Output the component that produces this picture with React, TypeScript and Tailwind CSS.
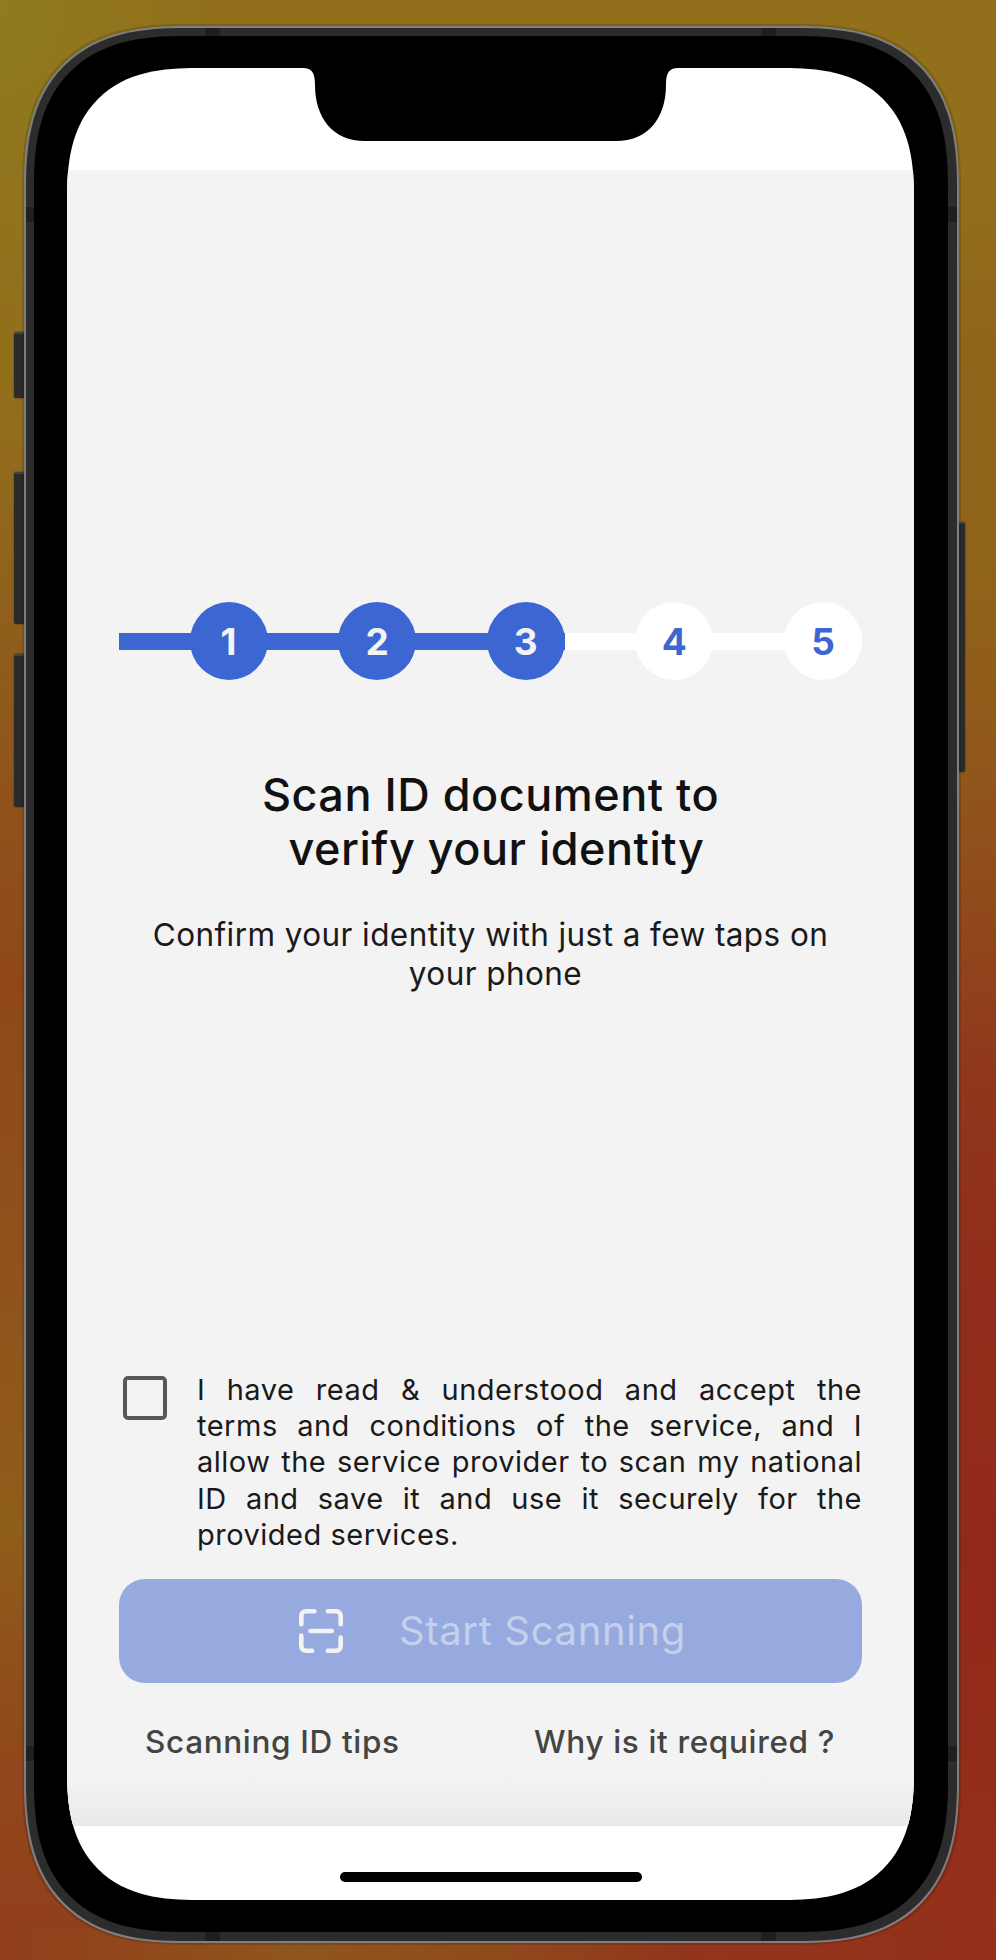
import React from "react";

const steps = [1, 2, 3, 4, 5];
const CURRENT_STEP = 3;

const consentLines = [
  "I have read & understood and accept the",
  "terms and conditions of the service, and I",
  "allow the service provider to scan my national",
  "ID and save it and use it securely for the",
];

function ScanIcon() {
  return (
    <svg width="44" height="44" viewBox="0 0 44 44" fill="none" stroke="#f3f3f3" strokeWidth="4.6" strokeLinecap="round" strokeLinejoin="round">
      <path d="M2.3 15.2V6.8a4.5 4.5 0 0 1 4.5-4.5h8.6" />
      <path d="M28.8 2.3h8.4a4.5 4.5 0 0 1 4.5 4.5v8.4" />
      <path d="M2.3 26.6v10.6a4.5 4.5 0 0 0 4.5 4.5h6.4" />
      <path d="M28.8 41.7h8.4a4.5 4.5 0 0 0 4.5-4.5v-8.6" />
      <path d="M11.4 22h21.4" />
    </svg>
  );
}

function Stepper() {
  return (
    <div className="flex h-[78px] w-[743px] items-center">
      {steps.map((n) => {
        const done = n <= CURRENT_STEP;
        return (
          <div
            key={n}
            className={`flex h-[17px] flex-1 items-center justify-end ${done ? "bg-[#3c66d2]" : "bg-white"}`}
          >
            <div
              className={`flex size-[78px] shrink-0 items-center justify-center rounded-full pt-px text-[37px] font-bold leading-none ${
                done ? "bg-[#3c66d2] text-[#f3f3f3]" : "bg-white text-[#3c66d2]"
              }`}
            >
              {n}
            </div>
          </div>
        );
      })}
    </div>
  );
}

export default function App() {
  return (
    <div className="relative h-[1960px] w-[996px] overflow-hidden bg-[#92701b] font-['Inter',sans-serif]">
      {/* Backdrop colours */}
      <div className="absolute inset-y-0 left-0 w-1/2 bg-[linear-gradient(180deg,#92701b_0px,#92701b_380px,#8f5f1b_620px,#90521b_810px,#8f471a_980px,#90501b_1220px,#8f5e1a_1530px,#904b1b_1710px,#91431b_1850px,#913e1b_1960px)]" />
      <div className="absolute inset-y-0 right-0 w-1/2 bg-[linear-gradient(180deg,#92701b_0px,#92701b_160px,#90651a_340px,#90641a_560px,#90581b_760px,#904a1b_900px,#91361b_1090px,#902d1b_1280px,#92291a_1600px,#93321a_1960px)]" />
      <div className="absolute left-0 top-0 h-[300px] w-[200px] bg-[radial-gradient(ellipse_at_top_left,#8f7b20_0%,#90771e88_45%,transparent_100%)]" />
      <div className="absolute bottom-0 left-0 h-8 w-full bg-[linear-gradient(90deg,#913e1b_0%,#904a1b_16%,#8f561b_30%,#904a1b_50%,#92361b_68%,#93301a_100%)]" />

      {/* Side keys */}
      <div className="absolute left-[14px] top-[332px] h-[66px] w-[14px] rounded-l-[2px] border-t-2 border-[#44443e] bg-[#2b2b2b] shadow-[0_0_2px_#0008]" />
      <div className="absolute left-[14px] top-[472px] h-[152px] w-[14px] rounded-l-[2px] border-t-2 border-[#44443e] bg-[#2b2b2b] shadow-[0_0_2px_#0008]" />
      <div className="absolute left-[14px] top-[654px] h-[153px] w-[14px] rounded-l-[2px] border-t-2 border-[#44443e] bg-[#2b2b2b] shadow-[0_0_2px_#0008]" />
      <div className="absolute left-[954px] top-[522px] h-[250px] w-[11px] rounded-r-[2px] border-t-2 border-[#44443e] bg-[#2b2b2b] shadow-[0_0_2px_#0008]" />

      {/* Device body */}
      <div className="relative ml-6 mt-[26px] h-[1917px] w-[935px] rounded-[140px] bg-[#7f7f7f] p-[2px] shadow-[0_0_0_2px_#00000022] supports-[corner-shape:round]:rounded-[162px] supports-[corner-shape:round]:[corner-shape:superellipse(1.35)]">
        <div className="relative h-full w-full overflow-hidden rounded-[138px] bg-[#2c2c2c] p-2 pr-[9px] pb-[9px] supports-[corner-shape:round]:rounded-[160px] supports-[corner-shape:round]:[corner-shape:superellipse(1.35)]">
          <div className="absolute left-[179px] top-0 h-full w-[15px] bg-[#1f1f1f]" />
          <div className="absolute left-[735px] top-0 h-full w-[15px] bg-[#1f1f1f]" />
          <div className="absolute left-0 top-[179px] h-[15px] w-full bg-[#1f1f1f]" />
          <div className="absolute left-0 top-[1718px] h-[15px] w-full bg-[#1f1f1f]" />
          <div className="relative h-full w-full rounded-[130px] bg-black pb-8 pl-[33px] pr-[34px] pt-8 supports-[corner-shape:round]:rounded-[151px] supports-[corner-shape:round]:[corner-shape:superellipse(1.35)]">
            <Screen />
          </div>
        </div>
      </div>
    </div>
  );
}

function Screen() {
  return (
    <div className="relative flex h-[1832px] w-[847px] flex-col overflow-hidden rounded-[106px] bg-white supports-[corner-shape:round]:rounded-[130px] supports-[corner-shape:round]:[corner-shape:superellipse(1.35)]">
      <svg className="absolute left-[236px] top-0" width="375" height="74" viewBox="0 0 375 74">
        <path d="M0 0C9 0 12 5 12 17C12 50 30 73 62 73H313C345 73 363 50 363 17C363 5 366 0 375 0Z" fill="#000" />
      </svg>

      <main className="mt-[102px] flex h-[1656px] flex-col bg-[#f3f3f3] bg-[linear-gradient(180deg,transparent_1600px,#efefef_1630px,#e9e9e9_1656px)] px-[52px] pt-[432px]">
        <Stepper />

        <h1 className="mt-[88px] text-center text-[45px] font-medium leading-[54px] tracking-[0.5px] text-[#111]">
          Scan ID document to
          <br />
          <span className="ml-[12px]">verify your identity</span>
        </h1>
        <p className="mt-[39px] text-center text-[31.5px] leading-[39px] tracking-[0.42px] text-[#1a1a1a]">
          Confirm your identity with just a few taps on
          <br />
          <span className="ml-[10px]">your phone</span>
        </p>

        <label className="mt-[379px] flex h-[181px]">
          <span className="ml-[4px] mt-[4px] size-[44px] shrink-0 rounded-[5px] border-[4.5px] border-[#575757]" />
          <span className="ml-[30px] w-[665px] text-[29px] leading-[36.2px] tracking-[0.5px] text-[#1a1a1a]">
            {consentLines.map((line) => (
              <span key={line} className="block [text-align-last:justify]">
                {line}{" "}
              </span>
            ))}
            <span className="block">provided services.</span>
          </span>
        </label>

        <button className="mt-[26px] flex h-[104px] w-[743px] items-center rounded-[26px] bg-[#96aadf] pl-[180px]">
          <ScanIcon />
          <span className="ml-[56px] text-[40px] leading-none tracking-[0.65px] text-[#c5d0ea]">Start Scanning</span>
        </button>

        <nav className="mt-[39px] flex justify-between pl-[26px] pr-[27px] text-[31.5px] font-medium leading-[39px] tracking-[0.65px] text-[#444]">
          <a>Scanning ID tips</a>
          <a>Why is it required ?</a>
        </nav>
      </main>

      <div className="mx-auto mt-[46px] h-[10px] w-[302px] rounded-full bg-black" />
    </div>
  );
}
